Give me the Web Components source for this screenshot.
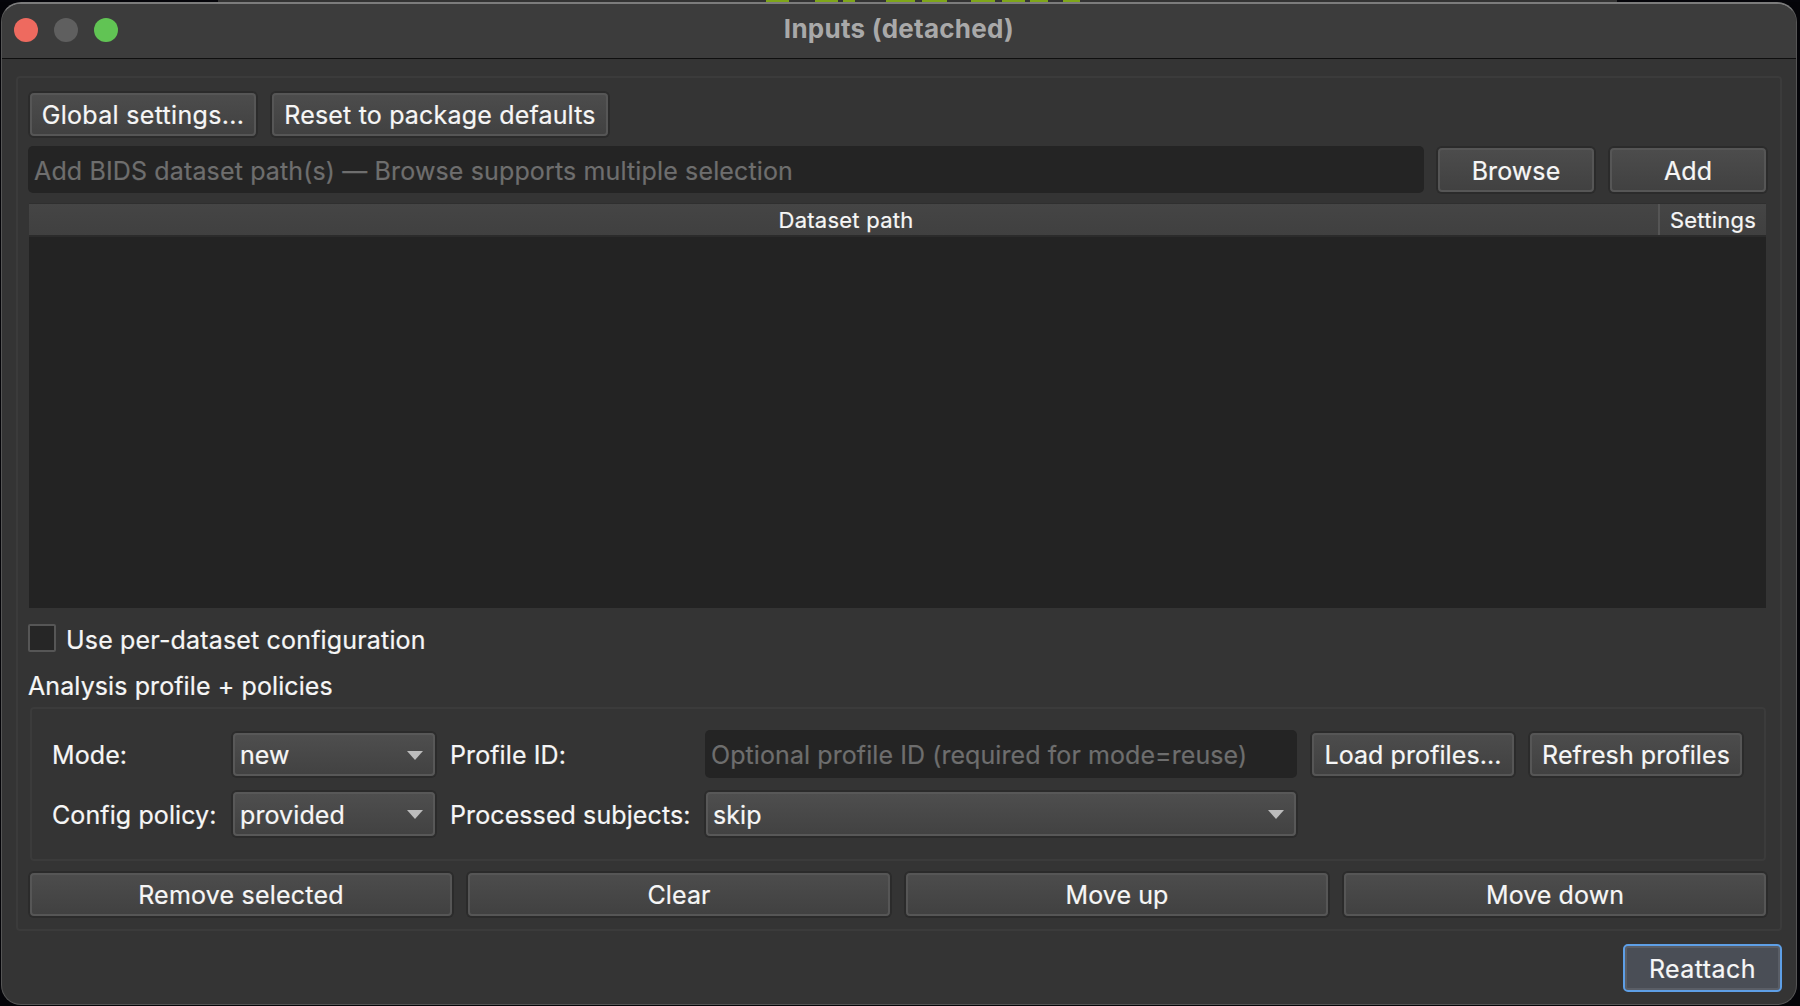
<!DOCTYPE html>
<html>
<head>
<meta charset="utf-8">
<title>Inputs (detached)</title>
<style>
  html, body { margin: 0; padding: 0; height: 1006px; overflow: hidden; background: #040408; }
  body { font-family: Inter, "Liberation Sans", sans-serif; font-size: 25px; color: #f6f6f6; -webkit-text-stroke: .2px currentColor; }
</style>
</head>
<body>
<desktop-strip></desktop-strip>
<mac-window heading="Inputs (detached)">
  <group-frame class="outer">
    <div style="display:flex;gap:14px;height:45px;margin-bottom:9px">
      <qt-button style="width:228px;letter-spacing:.32px">Global settings...</qt-button>
      <qt-button style="width:338px;letter-spacing:.18px">Reset to package defaults</qt-button>
    </div>
    <div style="display:flex;height:47px;margin-bottom:10px">
      <qt-field style="width:1396px;margin-left:-1px;margin-right:13px;letter-spacing:.14px">Add BIDS dataset path(s) — Browse supports multiple selection</qt-field>
      <qt-button style="width:158px;margin:1px 14px 0 0">Browse</qt-button>
      <qt-button style="width:158px;margin-top:1px">Add</qt-button>
    </div>
    <dataset-table></dataset-table>
    <qt-check>Use per-dataset configuration</qt-check>
    <div style="height:30px;line-height:28px;margin:20px 0 5px -1px;letter-spacing:.1px">Analysis profile + policies</div>
    <profile-grid></profile-grid>
    <div style="display:grid;grid-template-columns:repeat(4,424px);column-gap:14px;height:45px;margin-top:11px">
      <qt-button style="letter-spacing:.22px">Remove selected</qt-button>
      <qt-button>Clear</qt-button>
      <qt-button>Move up</qt-button>
      <qt-button>Move down</qt-button>
    </div>
  </group-frame>
  <div style="display:flex;justify-content:flex-end;margin-top:13px">
    <qt-button primary style="width:159px;height:48px;letter-spacing:.45px">Reattach</qt-button>
  </div>
</mac-window>

<script>
// bit of the desktop peeking out above the window
class DesktopStrip extends HTMLElement {
  constructor() {
    super();
    const bits = [[766,789],[815,838],[843,855],[886,915],[922,947],[971,995],[1002,1025],[1030,1048],[1063,1080]];
    const stops = bits.map(b => `transparent ${b[0]}px, #7fa61a ${b[0]}px, #7fa61a ${b[1]}px, transparent ${b[1]}px`).join(",");
    this.attachShadow({mode: "open"}).innerHTML = `
      <style>
        :host {
          display: block;
          height: 2px;
          background:
            linear-gradient(to right, ${stops}),
            linear-gradient(to right, #05050a 218px, #333 218px, #333 1617px, #05050a 1617px);
        }
      </style>`;
  }
}

class MacWindow extends HTMLElement {
  constructor() {
    super();
    this.attachShadow({mode: "open"}).innerHTML = `
      <style>
        :host {
          display: block;
          box-sizing: border-box;
          width: 1796px;
          height: 1003px;
          margin-left: 1px;
          background: #343434;
          border: 1px solid #555;
          border-top: 2px solid #7c7c7c;
          border-radius: 20px;
          overflow: hidden;
        }
        .bar {
          display: grid;
          grid-template-columns: 1fr auto 1fr;
          align-items: center;
          box-sizing: border-box;
          height: 55px;
          padding: 0 12px 2px;
          background: #3c3c3c;
          border-bottom: 1px solid #0f0f0f;
        }
        .lights { display: flex; gap: 16px; }
        .lights i { width: 24px; height: 24px; border-radius: 50%; }
        .title { font-weight: 700; font-size: 26px; line-height: 30px; color: #a9a9a9; margin-bottom: 3px; letter-spacing: .25px; -webkit-text-stroke: 0; }
        .main { padding: 17px 14px 0; }
      </style>
      <div class="bar">
        <div class="lights">
          <i style="background:#ee6a5f"></i><i style="background:#5f5f5f"></i><i style="background:#61c454"></i>
        </div>
        <div class="title">${this.getAttribute("heading")}</div>
        <div></div>
      </div>
      <div class="main"><slot></slot></div>`;
  }
}

class GroupFrame extends HTMLElement {
  constructor() {
    super();
    this.attachShadow({mode: "open"}).innerHTML = `
      <style>
        :host {
          display: block;
          box-sizing: border-box;
          height: 855px;
          padding: 14px 13px 0 11px;
          border: 2px solid #3b3b3b;
          border-radius: 4px;
        }
      </style>
      <slot></slot>`;
  }
}

class QtButton extends HTMLElement {
  constructor() {
    super();
    this.attachShadow({mode: "open"}).innerHTML = `
      <style>
        :host {
          display: block;
          box-sizing: border-box;
          border: 1px solid #2b2b2b;
          box-shadow: 0 0 0 1px #2b2b2b;
          border-radius: 5px;
          white-space: nowrap;
          letter-spacing: .08px;
        }
        .face {
          box-sizing: border-box;
          height: 100%;
          display: flex;
          align-items: center;
          justify-content: center;
          padding: 1px 8px 0;
          border: 2px solid #565656;
          border-radius: 4px;
          background: linear-gradient(#4c4c4c, #414141);
        }
        :host([primary]) { border: 0; box-shadow: none; }
        :host([primary]) .face { background: #4a4e56; border-color: #5e9fe6; box-shadow: inset 0 0 0 2px #5a5e66; border-radius: 5px; }
      </style>
      <div class="face"><slot></slot></div>`;
  }
}

class QtField extends HTMLElement {
  constructor() {
    super();
    this.attachShadow({mode: "open"}).innerHTML = `
      <style>
        :host {
          display: flex;
          align-items: center;
          box-sizing: border-box;
          padding: 2px 6px 0;
          background: #242424;
          border-radius: 5px;
          color: #6e6e6e;
          white-space: nowrap;
          letter-spacing: .08px;
        }
      </style>
      <slot></slot>`;
  }
}

class QtCombo extends HTMLElement {
  constructor() {
    super();
    this.attachShadow({mode: "open"}).innerHTML = `
      <style>
        :host {
          display: block;
          box-sizing: border-box;
          border: 1px solid #2b2b2b;
          box-shadow: 0 0 0 1px #2b2b2b;
          border-radius: 5px;
          letter-spacing: .1px;
        }
        .face {
          box-sizing: border-box;
          height: 100%;
          display: flex;
          align-items: center;
          justify-content: space-between;
          padding: 1px 10px 0 5px;
          border: 2px solid #585858;
          border-radius: 4px;
          background: linear-gradient(#4e4e4e, #424242);
        }
        svg { display: block; width: 16px; height: 9px; }
      </style>
      <div class="face">
        <slot></slot>
        <svg viewBox="0 0 16 9"><polygon points="0,0 16,0 8,9" fill="#bcbcbc"/></svg>
      </div>`;
  }
}

class QtCheck extends HTMLElement {
  constructor() {
    super();
    this.attachShadow({mode: "open"}).innerHTML = `
      <style>
        :host {
          display: flex;
          align-items: center;
          gap: 10px;
          height: 28px;
          margin: 16px 0 0 -1px;
          letter-spacing: .17px;
        }
        .box {
          box-sizing: border-box;
          width: 28px;
          height: 28px;
          background: #262626;
          border: 2px solid #565656;
          border-radius: 2px;
        }
        span { padding-top: 3px; }
      </style>
      <div class="box"></div><span><slot></slot></span>`;
  }
}

class DatasetTable extends HTMLElement {
  constructor() {
    super();
    this.attachShadow({mode: "open"}).innerHTML = `
      <style>
        :host {
          display: block;
          width: 1737px;
          height: 405px;
          background: #232323;
          font-size: 22px;
          letter-spacing: .25px;
        }
        .head {
          display: grid;
          grid-template-columns: 1fr 108px;
          box-sizing: border-box;
          height: 34px;
          background: linear-gradient(#454545, #404040);
          border-top: 1px solid #2f2f2f;
          border-bottom: 2px solid #2b2b2b;
        }
        .head div { display: flex; align-items: center; justify-content: center; padding-top: 1px; }
        .head div:first-child { padding-left: 5px; }
        .head div + div { border-left: 2px solid #555; box-sizing: border-box; }
      </style>
      <div class="head"><div>Dataset path</div><div>Settings</div></div>`;
  }
}

class ProfileGrid extends HTMLElement {
  constructor() {
    super();
    this.attachShadow({mode: "open"}).innerHTML = `
      <style>
        :host {
          display: grid;
          grid-template-columns: 166px 204px 241px 592px 204px 214px;
          grid-template-rows: 45px 46px;
          column-gap: 14px;
          row-gap: 14px;
          align-items: stretch;
          box-sizing: border-box;
          width: 1736px;
          height: 154px;
          margin-left: 1px;
          padding: 23px 0 0 20px;
          border: 2px solid #3b3b3b;
          border-radius: 4px;
          letter-spacing: .1px;
        }
        .lbl { display: flex; align-items: center; white-space: nowrap; padding-top: 1px; }
      </style>
      <div class="lbl">Mode:</div>
      <qt-combo>new</qt-combo>
      <div class="lbl">Profile ID:</div>
      <qt-field style="margin:-2px 0 -1px">Optional profile ID (required for mode=reuse)</qt-field>
      <qt-button>Load profiles...</qt-button>
      <qt-button>Refresh profiles</qt-button>
      <div class="lbl">Config policy:</div>
      <qt-combo>provided</qt-combo>
      <div class="lbl">Processed subjects:</div>
      <qt-combo>skip</qt-combo>`;
  }
}

customElements.define("desktop-strip", DesktopStrip);
customElements.define("mac-window", MacWindow);
customElements.define("group-frame", GroupFrame);
customElements.define("qt-button", QtButton);
customElements.define("qt-field", QtField);
customElements.define("qt-combo", QtCombo);
customElements.define("qt-check", QtCheck);
customElements.define("dataset-table", DatasetTable);
customElements.define("profile-grid", ProfileGrid);
</script>
</body>
</html>
